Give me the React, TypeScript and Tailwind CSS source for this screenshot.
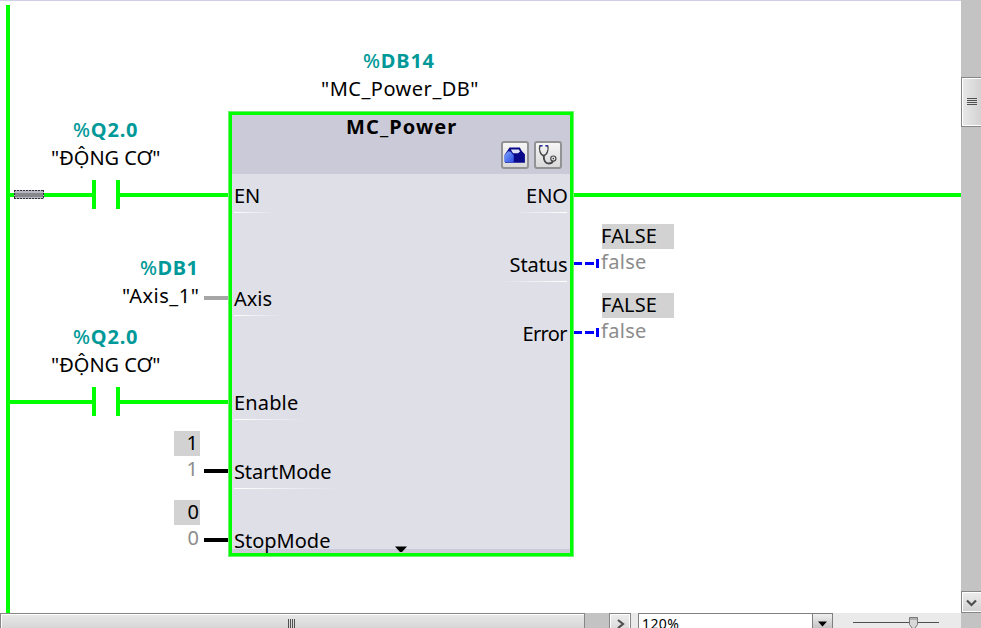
import type { ReactNode } from "react";

const GREEN = "#00ff00";

function Text({ className, children }: { className: string; children: ReactNode }) {
  return <div className={`absolute h-7 whitespace-nowrap leading-7 ${className}`}>{children}</div>;
}

function Address({ className, children }: { className: string; children: ReactNode }) {
  return (
    <Text className={`font-bold text-[#009999] ${className}`}>
      <span className="font-medium">%</span>
      {children}
    </Text>
  );
}

function Value({ className, children }: { className: string; children: ReactNode }) {
  return <div className={`absolute h-[25px] bg-[#d2d2d2] leading-[23px] ${className}`}>{children}</div>;
}

function Underline({ className }: { className: string }) {
  return <div className={`absolute h-px from-white to-transparent ${className}`} />;
}

function Contact({ y }: { y: number }) {
  return (
    <g>
      <rect x="10" y={y - 2} width="83" height="4" />
      <rect x="92" y={y - 15} width="4" height="29" />
      <rect x="116" y={y - 15} width="4" height="29" />
      <rect x="120" y={y - 2} width="108" height="4" />
    </g>
  );
}

function Wires() {
  return (
    <svg className="absolute left-0 top-0" width="961" height="613" shapeRendering="crispEdges">
      <g fill={GREEN}>
        <rect x="6" y="5" width="4" height="608" />
        <Contact y={195} />
        <Contact y={402} />
        <rect x="573" y="193" width="388" height="4" />
      </g>
      <rect x="14" y="190" width="30" height="9" fill="#b8b8c2" />
      <rect x="15" y="193" width="28" height="4" fill="#85878c" />
      <path d="M14 190.5h30M14 198.5h30" stroke="#303038" strokeDasharray="2 1" />
      <path d="M14.5 190v9M43.5 190v9" stroke="#303038" strokeDasharray="2 1" />
      <rect x="204" y="296" width="24" height="4" fill="#a6a6a6" />
      <rect x="204" y="469" width="24" height="4" />
      <rect x="204" y="538" width="24" height="4" />
      <g fill="#0000ff">
        {[262, 331].map((y) => (
          <g key={y}>
            <rect x="573" y={y} width="9" height="3" />
            <rect x="585" y={y} width="9" height="3" />
            <rect x="596" y={y - 3} width="3" height="9" />
          </g>
        ))}
      </g>
    </svg>
  );
}

function IconButton({ children }: { children: ReactNode }) {
  return (
    <div className="flex h-7 w-7 items-center justify-center rounded-[3px] border-2 border-[#929294] bg-gradient-to-b from-[#f6f6f6] to-[#d9d9d9]">
      {children}
    </div>
  );
}

function Toolbox() {
  return (
    <svg width="24" height="24" viewBox="0 0 24 24" className="shrink-0">
      <defs>
        <linearGradient id="side" x1="0" y1="0" x2="1" y2="1">
          <stop offset="0" stopColor="#7fa4ff" />
          <stop offset="1" stopColor="#2c4be0" />
        </linearGradient>
      </defs>
      <path d="M1.5 12 6.5 4.6h10.3l2 3.3 3.1 3.3v8.6H2Z" fill="#080888" />
      <path d="m1.3 12.4 3.7-4.1 2.5.3 3.3 3.8v7.4l-9.5-.7Z" fill="url(#side)" />
      <path d="M7.8 6.6h8l1.3 1.8-2 1.9h-5Z" fill="#dfe3f6" />
    </svg>
  );
}

function Stethoscope() {
  return (
    <svg width="24" height="24" viewBox="0 0 24 24" className="shrink-0" fill="none" stroke="#48484c" strokeWidth="1.4">
      <path d="M5.3 2.8H3.9C2.7 6 4.2 12 7.7 12.5 11.2 12 12.9 6 11.7 2.8h-1.5" />
      <path d="M4.3 2.8h2.3M9.3 2.8h2.3" stroke="#2c2cb0" strokeWidth="1.5" />
      <path d="M7.8 12.5c-.2 5 1.5 8 4.8 8 2.7 0 3.9-1 4.5-2.3" strokeWidth="1.9" />
      <circle cx="17.3" cy="15.6" r="2.6" strokeWidth="1.2" />
      <circle cx="17.3" cy="15.6" r=".8" fill="#3b3b3f" stroke="none" />
    </svg>
  );
}

function Block() {
  return (
    <div className="absolute left-[228px] top-[111px] flex h-[446px] w-[346px] border border-[#70f070]">
      <div className="flex grow flex-col border-[3px] border-[#00ff00] bg-[#dfdfe8]">
        <div className="flex h-[59px] flex-col items-end bg-[#cacad8] pr-[8.5px] pt-[25.5px]">
          <div className="flex gap-[5px]">
            <IconButton>
              <Toolbox />
            </IconButton>
            <IconButton>
              <Stethoscope />
            </IconButton>
          </div>
        </div>
        <div className="grow" />
        <div className="h-1 bg-[#cacad8]" />
      </div>
    </div>
  );
}

function Diagram() {
  return (
    <div className="relative grow overflow-hidden border-t border-[#cfcfe8] bg-white">
      <div className="absolute left-0 -top-px h-[613px] w-[961px]">
        <Wires />
        <Block />

        <Address className="left-[363px] top-[47px] tracking-[0.8px]">DB14</Address>
        <Text className="left-[321px] top-[75px] tracking-[0.5px]">"MC_Power_DB"</Text>
        <Text className="left-[346px] top-[113px] font-bold tracking-[1.1px]">MC_Power</Text>

        <Address className="left-[73px] top-[116px] tracking-[0.8px]">Q2.0</Address>
        <Text className="left-[51px] top-[144px]">"ĐỘNG CƠ"</Text>
        <Address className="left-[140px] top-[254px] tracking-[0.5px]">DB1</Address>
        <Text className="left-[122px] top-[282px] tracking-[0.5px]">"Axis_1"</Text>
        <Address className="left-[73px] top-[323px] tracking-[0.8px]">Q2.0</Address>
        <Text className="left-[51px] top-[351px]">"ĐỘNG CƠ"</Text>

        <Text className="left-[234px] top-[182px]">EN</Text>
        <Text className="left-[234px] top-[285px]">Axis</Text>
        <Text className="left-[234px] top-[389px] tracking-[0.15px]">Enable</Text>
        <Text className="left-[234px] top-[458px] tracking-[-0.15px]">StartMode</Text>
        <Text className="left-[234px] top-[527px]">StopMode</Text>
        <Text className="right-[393px] top-[182px]">ENO</Text>
        <Text className="right-[393.5px] top-[251px] tracking-[-0.1px]">Status</Text>
        <Text className="right-[394px] top-[320px] tracking-[-0.6px]">Error</Text>

        <Underline className="left-[234px] top-[212px] w-10 bg-gradient-to-r" />
        <Underline className="left-[234px] top-[315px] w-12 bg-gradient-to-r" />
        <Underline className="left-[234px] top-[419px] w-[72px] bg-gradient-to-r" />
        <Underline className="left-[234px] top-[488px] w-[105px] bg-gradient-to-r" />
        <Underline className="left-[514px] top-[212px] w-[53px] bg-gradient-to-l" />
        <Underline className="left-[499px] top-[281px] w-[68px] bg-gradient-to-l" />

        <Value className="left-[602px] top-[224px] w-[72px] -indent-px tracking-[0.15px]">FALSE</Value>
        <Text className="left-[601px] top-[248px] tracking-[0.3px] text-[#8c8c8c]">false</Text>
        <Value className="left-[602px] top-[293px] w-[72px] -indent-px tracking-[0.15px]">FALSE</Value>
        <Text className="left-[601px] top-[317px] tracking-[0.3px] text-[#8c8c8c]">false</Text>
        <Value className="left-[174px] top-[431px] w-[26px] pr-0.5 text-right">1</Value>
        <Text className="right-[763px] top-[455px] text-[#8c8c8c]">1</Text>
        <Value className="left-[174px] top-[500px] w-[26px] pr-px text-right">0</Value>
        <Text className="right-[762px] top-[524px] text-[#8c8c8c]">0</Text>

        <svg className="absolute left-[395px] top-[546px]" width="12" height="7">
          <path d="M0 .5h12L7 6H5Z" />
        </svg>
      </div>
    </div>
  );
}

function VerticalScrollbar() {
  return (
    <div className="flex w-5 shrink-0 flex-col bg-[#c3c3c3]">
      <div className="h-[77px]" />
      <div className="flex h-[50px] border-y border-l border-[#868686]">
        <div className="flex grow flex-col items-start justify-center gap-px border-y border-l border-white bg-gradient-to-r from-[#e8e8e8] to-[#d2d2d2] pb-0.5 pl-1">
          <div className="h-px w-2.5 bg-[#505050]" />
          <div className="h-px w-2.5 bg-[#505050]" />
          <div className="h-px w-2.5 bg-[#505050]" />
          <div className="h-px w-2.5 bg-[#505050]" />
        </div>
      </div>
      <div className="grow" />
      <div className="flex h-[22px] border-y border-l border-[#868686]">
        <div className="flex grow items-center border-y border-l border-white bg-gradient-to-b from-[#ececec] to-[#d2d2d2] pl-[3px] pt-px">
          <svg width="12" height="8" fill="none" stroke="#505050" strokeWidth="2.2">
            <path d="m1 1.5 4.5 4.5L10 1.5" />
          </svg>
        </div>
      </div>
      <div className="h-[15px]" />
    </div>
  );
}

function BottomBar() {
  return (
    <div className="flex h-[15px] shrink-0 overflow-hidden bg-[#eaeaea]">
      <div className="flex w-[585px] border-x border-t border-[#868686]">
        <div className="flex grow items-start gap-px border-l border-t border-white bg-gradient-to-b from-[#e8e8e8] to-[#d6d6d6] pl-[286px] pt-1">
          <div className="h-[10px] w-px bg-[#505050]" />
          <div className="h-[10px] w-px bg-[#505050]" />
          <div className="h-[10px] w-px bg-[#505050]" />
          <div className="h-[10px] w-px bg-[#505050]" />
        </div>
      </div>
      <div className="w-6 bg-[#c3c3c3]" />
      <div className="flex w-[22px] border-x border-t border-[#868686]">
        <div className="flex grow items-start border-x border-t border-white bg-gradient-to-b from-[#ececec] to-[#dcdcdc] pl-1.5 pt-1">
          <svg width="8" height="11" fill="none" stroke="#505050" strokeWidth="2.2">
            <path d="m1 1 5 4-5 4" />
          </svg>
        </div>
      </div>
      <div className="ml-[7px] flex w-[195px] border-l border-t border-[#808080] bg-white">
        <div className="h-3.5 grow pl-[3px] text-[14px] leading-[19px] tracking-[0.4px]">120%</div>
        <div className="flex w-[21px] items-start justify-center border-x border-[#808080] bg-gradient-to-b from-[#f0f0f0] to-[#c4c4c4] pt-[7px]">
          <svg width="9" height="6" className="shrink-0">
            <path d="M0 .5h9L4.5 5.5Z" />
          </svg>
        </div>
      </div>
      <svg className="ml-5" width="86" height="15">
        <path d="M0 9.5h86" stroke="#505050" />
        <path d="M56.5 4.5h8v7l-3 4h-2l-3-4Z" fill="#d8d8d8" stroke="#777" />
        <path d="M57 5h7v2h-7Z" fill="#b0b0b0" />
      </svg>
    </div>
  );
}

export default function App() {
  return (
    <div className="flex h-[628px] w-[981px] overflow-hidden bg-white font-['Noto_Sans','Open_Sans',sans-serif] text-[20px] text-black">
      <div className="flex w-[961px] shrink-0 flex-col">
        <Diagram />
        <BottomBar />
      </div>
      <VerticalScrollbar />
    </div>
  );
}
